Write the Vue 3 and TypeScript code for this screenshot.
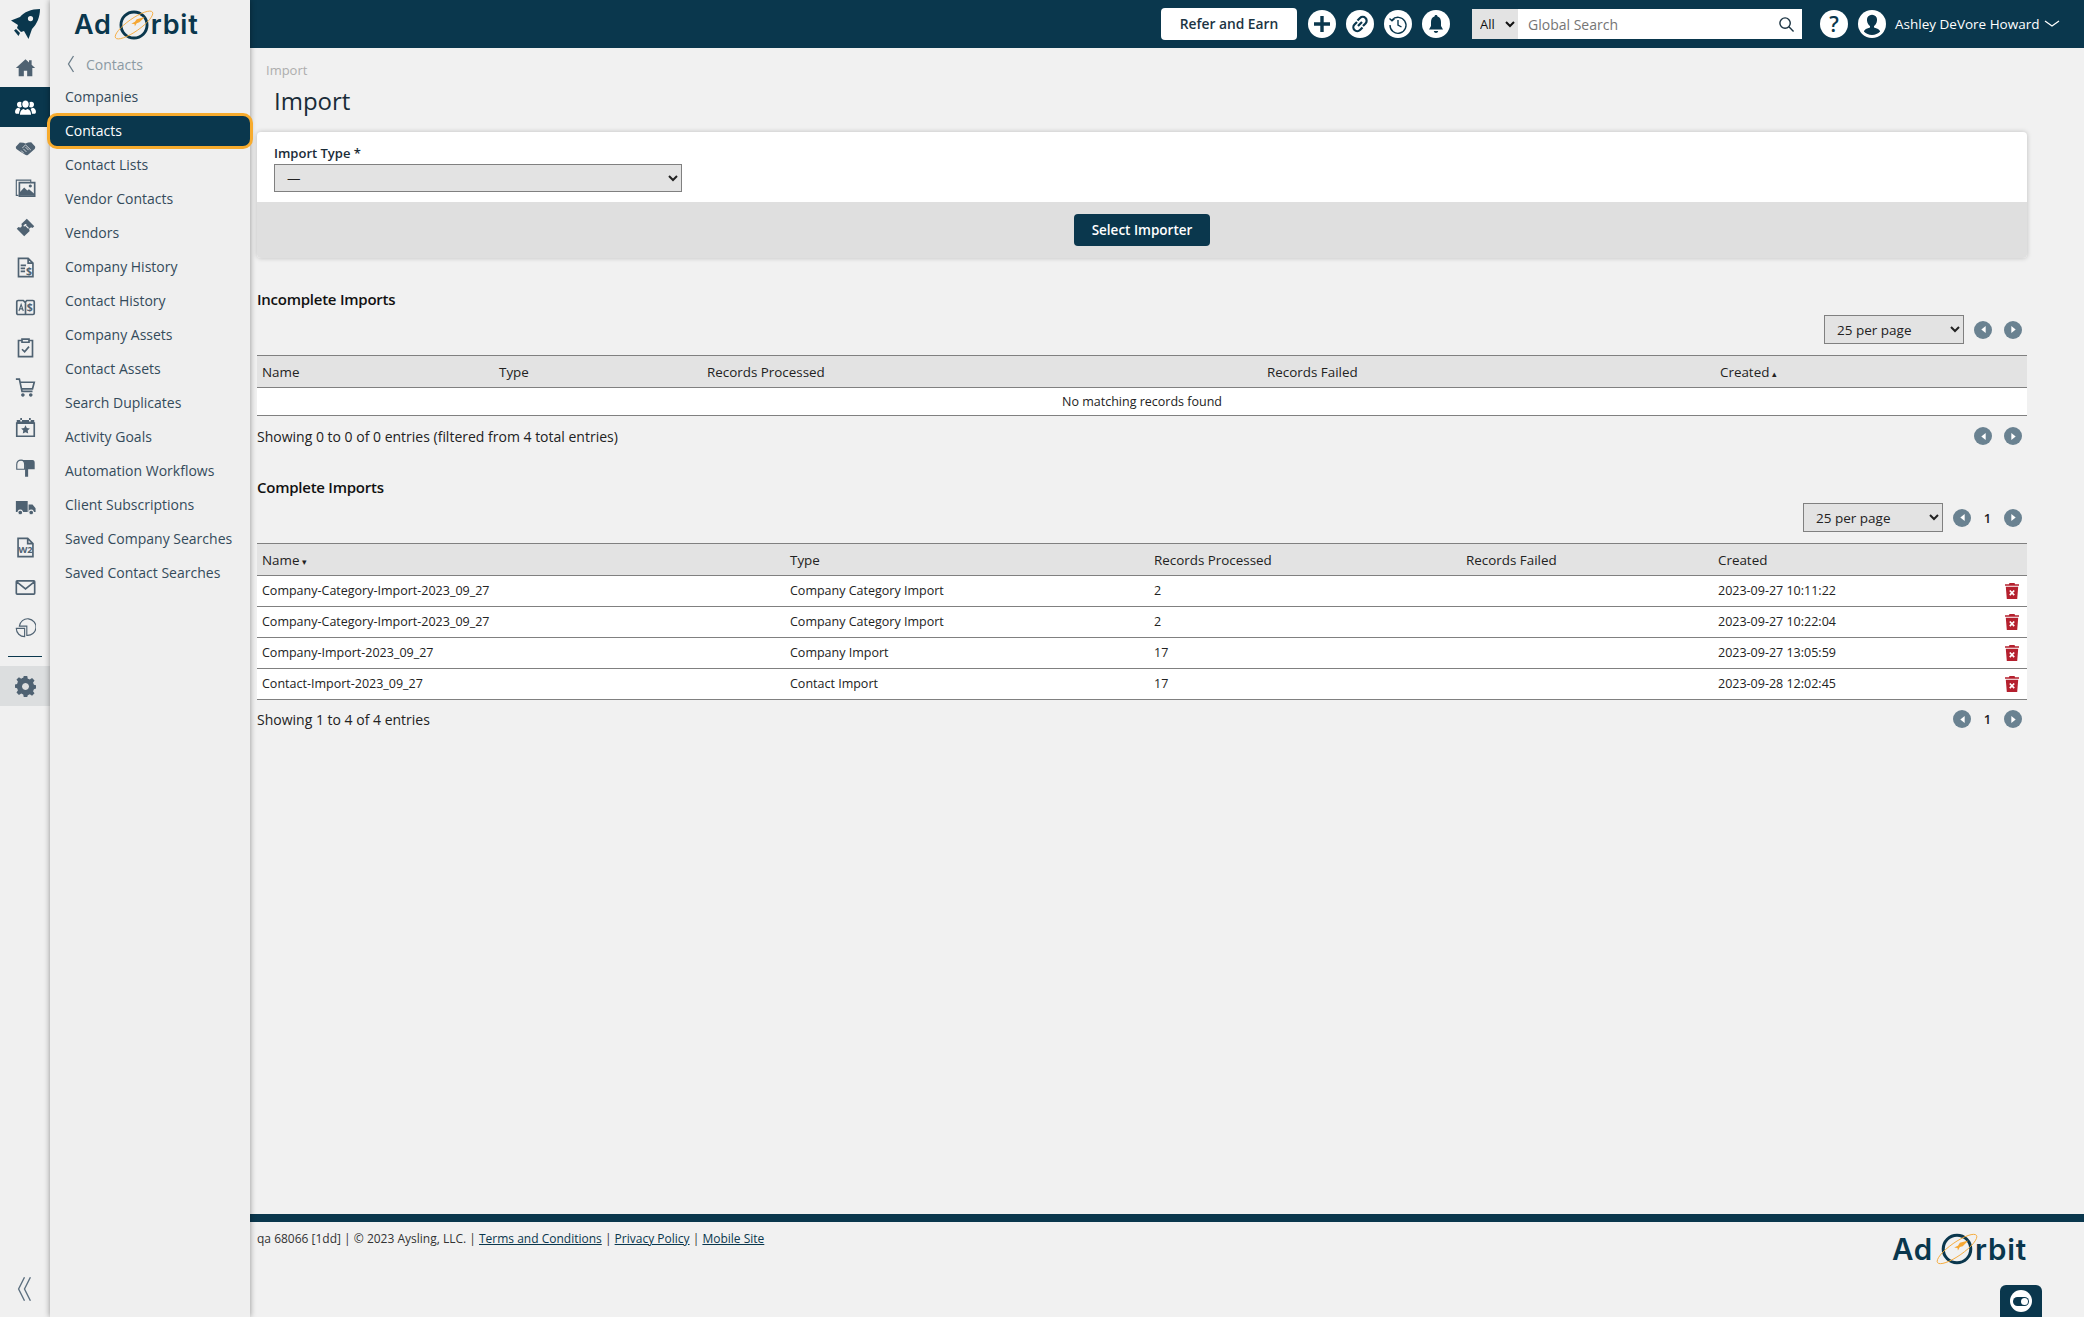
<script setup lang="ts">
type Shape = { d: string; kind?: 'fill' | 'line' | 'thin' | 'cut' | 'halo' };
interface RailIcon { id: string; shapes: Shape[]; label?: string }

const railIcons: RailIcon[] = [
  { id: 'home', shapes: [{ d: 'M12 2.500 1 12.600h3.200V22h5.900v-6.200h3.800V22h5.900v-9.400H23l-4-3.700V3.600h-3v2.600z' }] },
  { id: 'people', shapes: [
    { d: 'M5.500 5.500a3.200 3.200 0 1 1 0 6.400 3.200 3.200 0 0 1 0-6.400zM18.500 5.500a3.200 3.200 0 1 1 0 6.400 3.200 3.200 0 0 1 0-6.400z' },
    { d: 'M0 17.500c0-3 1.500-5 3.500-5.300l2 1 2 3V19H1zM24 17.500c0-3-1.500-5-3.500-5.300l-2 1-2 3V19H23z' },
    { d: 'M12 3.500a4.300 4.300 0 0 1 4.300 4.700c-.1 2.300-1.900 4.600-4.300 4.600s-4.200-2.300-4.300-4.600A4.300 4.300 0 0 1 12 3.500zM5 21c0-4.300 1.800-7.500 4.500-8l2.500 1.300 2.500-1.300c2.700.5 4.500 3.700 4.500 8z', kind: 'halo' },
  ] },
  { id: 'handshake', shapes: [
    { d: 'M1 11 5.500 6.200l4 .3 2.500 1 3-1.300 3.500-.2 4.500 4.800c.4 1.600-.4 3-1.500 3.800l-6.500 5.600c-1 .8-2.300.8-3.300.2l-6-3.700L2 14c-.8-.8-1.100-2-1-3z' },
    { d: 'M8.500 12.500 12 9l6 5.800M7 15.500l3 3M9.500 13.500l3.500 3.500M12 11.500l3.500 3.500', kind: 'cut' },
  ] },
  { id: 'images', shapes: [
    { d: 'M4 21H1.500V3.500H18V6', kind: 'thin' },
    { d: 'M5 6.500h17.500V22H5z', kind: 'line' },
    { d: 'M5.500 21.500v-4l5-5.500 3.500 3.500 2-1.500 6 5v2.500z' },
    { d: 'M17.500 8.500a1.800 1.800 0 1 0 .01 0z' },
  ] },
  { id: 'ticket', shapes: [{ d: 'M13.500 2 22 10.500l-2 2c-1-.8-2.400-.7-3.200.2s-.8 2.200 0 3.200l-6.300 6.100L2 13.500l2-2c1 .8 2.300.7 3.200-.2.800-.9.800-2.300 0-3.200zM11.500 8l-2 2 1 1 1-1 3.500 3.500 1-1-3.500-3.500 1-1z' }] },
  { id: 'invoice', shapes: [{ d: 'M4 1.500h11l5.500 5.500v15.500H4zM15 1.500V7h5.500M6.500 9.500h6M6.500 13h5M6.500 16.500h5', kind: 'line' }], label: '$' },
  { id: 'ad', shapes: [{ d: 'M2 5.500c0-.8.700-1.500 1.500-1.500h6l2 2 2-2h7c.8 0 1.500.7 1.500 1.500v13c0 .8-.7 1.500-1.500 1.500h-17C2.700 20 2 19.300 2 18.500zM12 6v14', kind: 'line' }, { d: 'M4.500 16 7 8.500 9.500 16M5.300 13.500h3.400', kind: 'thin' }], label: '$' },
  { id: 'clip', shapes: [{ d: 'M8 4H4v18.500h16V4h-4M8 2.500h8V6H8zM8 14l3 3 5-6', kind: 'line' }] },
  { id: 'cart', shapes: [
    { d: 'M1 2.500h4l3 14h12M6 6h16l-2 7.500H7.500', kind: 'line' },
    { d: 'M9 18.500a2 2 0 1 0 .01 0zM18 18.500a2 2 0 1 0 .01 0z' },
  ] },
  { id: 'cal', shapes: [
    { d: 'M2 7h20v15H2z', kind: 'line' },
    { d: 'M2 3.500h20V8H2zM6 1h2v4H6zM16 1h2v4h-2z' },
    { d: 'm12 9.500 1.500 3.100 3.500.5-2.500 2.400.6 3.400-3.100-1.600-3.100 1.600.6-3.400L7 13.100l3.500-.5z' },
  ] },
  { id: 'mailbox', shapes: [
    { d: 'M7 3.500c-3 0-5 2-5 5v5.500h9V8.500c0-3-1.800-5-4-5z', kind: 'thin' },
    { d: 'M7 3.500h13c1.700 0 2.500 1.300 2.500 3V14H11.500V8.500C11.500 6 10 4.300 7 3.500zM11.500 14h3.500v8.500h-3.500z' },
  ] },
  { id: 'truck', shapes: [
    { d: 'M1 4.500h13.500V17H1zM15.500 8.500H20l3.500 4.300V17h-8z' },
    { d: 'M6 15a2.700 2.700 0 1 0 .01 0zM18.500 15a2.700 2.700 0 1 0 .01 0z', kind: 'halo' },
  ] },
  { id: 'w2', shapes: [{ d: 'M3.500 1.500h11l6 6v15h-17zM14.500 1.500v6h6', kind: 'line' }], label: 'W2' },
  { id: 'mail', shapes: [{ d: 'M2.500 4.500h19c.6 0 1 .4 1 1v13c0 .6-.4 1-1 1h-19c-.6 0-1-.4-1-1v-13c0-.6.4-1 1-1zM2 5.500l10 8 10-8', kind: 'line' }] },
  { id: 'pie', shapes: [
    { d: 'M5 10.500a9.500 9.500 0 1 1 8.500 10.500V10.500z', kind: 'thin' },
    { d: 'M1.500 13h9.500v9.500A9.500 9.500 0 0 1 1.500 13z', kind: 'thin' },
  ] },
];

const gear =
  'M10 1h4l.6 3a8 8 0 0 1 2.300 1l2.600-1.700 2.800 2.800L20.600 8.700a8 8 0 0 1 1 2.300l2.400.6v3.800l-2.400.6a8 8 0 0 1-1 2.300l1.700 2.500-2.800 2.800-2.600-1.700a8 8 0 0 1-2.300 1L14 25h-4l-.6-3a8 8 0 0 1-2.300-1l-2.600 1.700-2.800-2.800 1.700-2.500a8 8 0 0 1-1-2.300L0 14.400v-3.800l2.400-.6a8 8 0 0 1 1-2.300L1.700 5.100l2.800-2.800L7.100 4a8 8 0 0 1 2.300-1zM12 9a4 4 0 1 0 .01 0z';

const menu: string[] = [
  'Companies', 'Contacts', 'Contact Lists', 'Vendor Contacts', 'Vendors', 'Company History',
  'Contact History', 'Company Assets', 'Contact Assets', 'Search Duplicates', 'Activity Goals',
  'Automation Workflows', 'Client Subscriptions', 'Saved Company Searches', 'Saved Contact Searches',
];

const completeRows = [
  { name: 'Company-Category-Import-2023_09_27', type: 'Company Category Import', done: '2', created: '2023-09-27 10:11:22' },
  { name: 'Company-Category-Import-2023_09_27', type: 'Company Category Import', done: '2', created: '2023-09-27 10:22:04' },
  { name: 'Company-Import-2023_09_27', type: 'Company Import', done: '17', created: '2023-09-27 13:05:59' },
  { name: 'Contact-Import-2023_09_27', type: 'Contact Import', done: '17', created: '2023-09-28 12:02:45' },
];
</script>

<template>
  <div class="app">
    <nav class="rail">
      <svg class="rocket" viewBox="0 0 32 32" aria-hidden="true">
        <path fill-rule="evenodd" d="M31 1C22 1 15 4 11 9L2 12.500 9 17l-1 3 4 4 3-1 4.500 8L23 21c5-5 8-12 8-20zM21.500 8a2.600 2.600 0 1 1 0 5.200 2.600 2.600 0 0 1 0-5.200z" />
        <path d="M5 22.500 7 21l4 4-1.500 3z" />
      </svg>
      <a
        v-for="icon in railIcons"
        :key="icon.id"
        class="rail-item"
        :class="{ active: icon.id === 'people' }"
      >
        <svg viewBox="0 0 24 24" aria-hidden="true">
          <path v-for="(s, i) in icon.shapes" :key="i" :d="s.d" :class="s.kind ?? 'fill'" />
          <text v-if="icon.label === '$' && icon.id === 'invoice'" x="16" y="20" class="glyph">$</text>
          <text v-if="icon.label === '$' && icon.id === 'ad'" x="17" y="16.500" class="glyph">$</text>
          <text v-if="icon.label === 'W2'" x="12" y="18.500" class="glyph w2">W2</text>
        </svg>
      </a>
      <div class="rail-rule"></div>
      <a class="rail-item settings">
        <svg viewBox="0 0 24 26" aria-hidden="true"><path class="fill" :d="gear" /></svg>
      </a>
      <svg class="collapse" viewBox="0 0 14 24" aria-hidden="true">
        <path d="M7 1 1.500 12 7 23M12.500 1 7 12l5.500 11" />
      </svg>
    </nav>

    <aside class="submenu">
      <div class="logo top-logo">
        <span>Ad</span>
        <svg class="logo-o" viewBox="0 0 40 40" aria-hidden="true">
          <circle cx="20" cy="20" r="14.500" class="o-ring" />
          <ellipse cx="20" cy="20" rx="25" ry="7" transform="rotate(-35 20 20)" class="o-orbit" />
          <path d="m32 11-9 2.500-2 3-4 2 3.500.5.500 2.500 2-3.500 3-1z" class="o-ship" />
        </svg>
        <span>rbit</span>
      </div>
      <div class="back">
        <svg viewBox="0 0 8 18" aria-hidden="true"><path d="M6.500 1 1.500 9l5 8" /></svg>
        <span>Contacts</span>
      </div>
      <ul class="menu">
        <li v-for="m in menu" :key="m" :class="{ current: m === 'Contacts' }">{{ m }}</li>
      </ul>
    </aside>

    <div class="page">
      <header class="topbar">
        <button class="refer">Refer and Earn</button>
        <div class="circles">
          <span class="circle"><svg viewBox="0 0 24 24"><path d="M12 4v16M4 12h16" class="c-plus" /></svg></span>
          <span class="circle"><svg viewBox="0 0 24 24"><path d="M10 14l4-4M9.500 8.500l2.500-2.500a3.500 3.500 0 0 1 5.500 5.500l-2.500 2.500M14.500 15.500 12 18a3.500 3.500 0 0 1-5.500-5.500L9 10" class="c-line" /></svg></span>
          <span class="circle"><svg viewBox="0 0 24 24"><path d="M6 8a8 8 0 1 1-2 5M3.500 6.500 6 8.800l2.500-2M12 8v5l3.500 2" class="c-thin" /></svg></span>
          <span class="circle"><svg viewBox="0 0 24 24"><path d="M12 3c-1 0-1.500.6-1.500 1.500C8 5.300 7 7.500 7 10v4l-2 3.500h14L17 14v-4c0-2.500-1-4.700-3.500-5.500C13.500 3.600 13 3 12 3zM9.800 19h4.400c-.2 1.300-1.100 2-2.200 2s-2-.7-2.200-2z" class="c-fill" /></svg></span>
        </div>
        <div class="search">
          <select class="scope"><option>All</option></select>
          <input class="query" placeholder="Global Search" />
          <svg class="lens" viewBox="0 0 18 18"><circle cx="7.500" cy="7.500" r="5.500" /><path d="m11.500 11.500 5 5" /></svg>
        </div>
        <span class="circle help">?</span>
        <span class="circle user"><svg viewBox="0 0 24 24"><path d="M12 4a4.300 4.300 0 0 1 4.300 4.700c-.1 2.300-1.400 4.300-2.600 5v1.300c2.500.8 5 1.700 5.300 3.500a9.800 9.800 0 0 1-14 0c.3-1.800 2.800-2.700 5.300-3.500v-1.300c-1.200-.7-2.500-2.700-2.600-5A4.300 4.300 0 0 1 12 4z" class="c-fill" /></svg></span>
        <span class="username">Ashley DeVore Howard</span>
        <svg class="user-chev" viewBox="0 0 16 8"><path d="m1 1 7 5 7-5" /></svg>
      </header>

      <main class="content">
        <div class="crumb">Import</div>
        <h1>Import</h1>

        <section class="card">
          <div class="card-body">
            <label class="field-label">Import Type *</label>
            <select class="native type-select"><option>—</option></select>
          </div>
          <div class="card-foot"><button class="primary">Select Importer</button></div>
        </section>

        <h2 class="first">Incomplete Imports</h2>
        <div class="toolbar">
          <select class="native per-page"><option>25 per page</option></select>
          <div class="pager">
            <button class="nav"><svg viewBox="0 0 8 10"><path d="M6.500 1v8L1.500 5z" /></svg></button>
            <button class="nav"><svg viewBox="0 0 8 10"><path d="M1.500 1v8l5-4z" /></svg></button>
          </div>
        </div>
        <table class="grid incomplete">
          <colgroup><col class="a" /><col class="b" /><col class="c" /><col class="d" /><col /></colgroup>
          <thead>
            <tr>
              <th>Name</th><th>Type</th><th>Records Processed</th><th>Records Failed</th>
              <th>Created <span class="sort">▴</span></th>
            </tr>
          </thead>
          <tbody>
            <tr><td colspan="5" class="empty">No matching records found</td></tr>
          </tbody>
        </table>
        <div class="tfoot">
          <span>Showing 0 to 0 of 0 entries (filtered from 4 total entries)</span>
          <div class="pager">
            <button class="nav"><svg viewBox="0 0 8 10"><path d="M6.500 1v8L1.500 5z" /></svg></button>
            <button class="nav"><svg viewBox="0 0 8 10"><path d="M1.500 1v8l5-4z" /></svg></button>
          </div>
        </div>

        <h2 class="second">Complete Imports</h2>
        <div class="toolbar">
          <select class="native per-page"><option>25 per page</option></select>
          <div class="pager">
            <button class="nav"><svg viewBox="0 0 8 10"><path d="M6.500 1v8L1.500 5z" /></svg></button>
            <span class="page-no">1</span>
            <button class="nav"><svg viewBox="0 0 8 10"><path d="M1.500 1v8l5-4z" /></svg></button>
          </div>
        </div>
        <table class="grid complete">
          <colgroup><col class="a" /><col class="b" /><col class="c" /><col class="d" /><col class="e" /><col /></colgroup>
          <thead>
            <tr>
              <th>Name <span class="sort">▾</span></th><th>Type</th><th>Records Processed</th><th>Records Failed</th><th>Created</th><th></th>
            </tr>
          </thead>
          <tbody>
            <tr v-for="(r, i) in completeRows" :key="i">
              <td>{{ r.name }}</td>
              <td>{{ r.type }}</td>
              <td>{{ r.done }}</td>
              <td></td>
              <td>{{ r.created }}</td>
              <td class="act">
                <svg class="trash" viewBox="0 0 14 16" aria-hidden="true">
                  <path class="t-red" d="M4.500 0h5l.6 1.300H14v1.500H0V1.300h3.900zM.8 3.700h12.400L12.200 16H1.800z" />
                  <path class="t-x" d="m4.800 7.500 4.400 4.600M9.200 7.500l-4.400 4.600" />
                </svg>
              </td>
            </tr>
          </tbody>
        </table>
        <div class="tfoot tight">
          <span>Showing 1 to 4 of 4 entries</span>
          <div class="pager">
            <button class="nav"><svg viewBox="0 0 8 10"><path d="M6.500 1v8L1.500 5z" /></svg></button>
            <span class="page-no">1</span>
            <button class="nav"><svg viewBox="0 0 8 10"><path d="M1.500 1v8l5-4z" /></svg></button>
          </div>
        </div>
      </main>

      <footer class="footer">
        <div class="foot-text">
          qa 68066 [1dd] | © 2023 Aysling, LLC. |
          <a>Terms and Conditions</a> | <a>Privacy Policy</a> | <a>Mobile Site</a>
        </div>
        <div class="logo foot-logo">
          <span>Ad</span>
          <svg class="logo-o" viewBox="0 0 40 40" aria-hidden="true">
            <circle cx="20" cy="20" r="14.500" class="o-ring" />
            <ellipse cx="20" cy="20" rx="25" ry="7" transform="rotate(-35 20 20)" class="o-orbit" />
            <path d="m32 11-9 2.500-2 3-4 2 3.500.5.500 2.500 2-3.500 3-1z" class="o-ship" />
          </svg>
          <span>rbit</span>
        </div>
        <button class="toggle">
          <span class="toggle-disc"><span class="toggle-pill"></span></span>
        </button>
      </footer>
    </div>
  </div>
</template>

<style>
html, body { margin: 0; padding: 0; background: #f1f1f1; }
</style>

<style scoped>
* { box-sizing: border-box; }
.app {
  display: flex;
  height: 100vh;
  min-height: 1317px;
  font-family: "Open Sans", "Noto Sans", sans-serif;
  color: #1a1a1a;
  background: #f1f1f1;
  overflow: hidden;
}

/* rail */
.rail {
  width: 50px;
  flex: none;
  display: flex;
  flex-direction: column;
  align-items: stretch;
  background: #f0f0f0;
  position: relative;
  z-index: 2;
}
.rocket { width: 32px; height: 32px; margin: 8px 0 7px 9px; fill: #0a374d; flex: none; }
.rail-item {
  height: 40px;
  flex: none;
  display: flex;
  align-items: center;
  justify-content: center;
}
.rail-item svg { width: 21px; height: 21px; }
.fill { fill: #4f6272; stroke: none; fill-rule: evenodd; }
.line { fill: none; stroke: #4f6272; stroke-width: 1.900; }
.thin { fill: none; stroke: #4f6272; stroke-width: 1.300; }
.cut { fill: none; stroke: #f0f0f0; stroke-width: 0.900; }
.halo { fill: #4f6272; stroke: #f0f0f0; stroke-width: 1.200; }
.glyph { font: 700 12px "Open Sans", sans-serif; fill: #4f6272; text-anchor: middle; }
.w2 { font-size: 10.500px; }
.active { background: #0a374d; }
.active .fill { fill: #fff; }
.active .halo { fill: #fff; stroke: #0a374d; }
.rail-rule { height: 1px; background: #0a374d; margin: 9px 8px 9px; flex: none; }
.settings { background: #dcdedf; }
.settings svg { width: 21px; height: 23px; }
.collapse {
  width: 15px;
  height: 26px;
  margin: auto 0 15px 17px;
  fill: none;
  stroke: #5d7080;
  stroke-width: 1.300;
  flex: none;
}

/* submenu */
.submenu {
  width: 200px;
  flex: none;
  background: #efefef;
  box-shadow: 0 0 6px rgba(0, 0, 0, 0.4);
  position: relative;
  z-index: 3;
}
.logo {
  display: flex;
  align-items: center;
  font-family: Inter, "Open Sans", sans-serif;
  font-weight: 600;
  color: #0a374d;
  letter-spacing: 0.800px;
}
.top-logo { font-size: 27px; height: 38px; margin: 6px 0 0 24px; line-height: 38px; }
.logo-o { width: 36px; height: 36px; margin: 0 -1px 0 4px; overflow: visible; flex: none; }
.o-ring { fill: none; stroke: #0a374d; stroke-width: 3.200; }
.o-orbit { fill: none; stroke: #f5a733; stroke-width: 0.900; }
.o-ship { fill: #f5a733; }
.back {
  display: flex;
  align-items: center;
  height: 20px;
  margin-top: 10px;
  padding-left: 17px;
  font-size: 14px;
  color: #8b9aa3;
}
.back svg { width: 8px; height: 18px; margin-right: 11px; fill: none; stroke: #6c7e8a; stroke-width: 1.300; }
.menu { list-style: none; margin: 6px 0 0; padding: 0; }
.menu li {
  height: 34px;
  line-height: 34px;
  padding-left: 15px;
  font-size: 14px;
  color: #344b5b;
  white-space: nowrap;
}
.menu li.current {
  height: 36px;
  line-height: 30px;
  margin: -1px -3px -1px -3px;
  padding-left: 15px;
  color: #fff;
  background: #0a374d;
  border: 3px solid #f7ab2d;
  border-radius: 10px;
  position: relative;
}

/* page */
.page { flex: 1; min-width: 0; display: flex; flex-direction: column; }
.topbar {
  height: 48px;
  flex: none;
  background: #0a374d;
  display: flex;
  align-items: center;
  padding-left: 911px;
  color: #fff;
}
.refer {
  width: 136px;
  height: 32px;
  border: 0;
  border-radius: 4px;
  background: #fff;
  color: #1c3443;
  font: 600 13.800px "Open Sans", sans-serif;
  padding: 0 0 1px;
}
.circles { display: flex; gap: 10px; margin-left: 11px; }
.circle {
  width: 28px;
  height: 28px;
  border-radius: 50%;
  background: #fff;
  display: flex;
  align-items: center;
  justify-content: center;
  flex: none;
}
.circle svg { width: 24px; height: 24px; }
.c-plus { fill: none; stroke: #0a374d; stroke-width: 3.400; }
.c-line { fill: none; stroke: #0a374d; stroke-width: 2.200; }
.c-thin { fill: none; stroke: #0a374d; stroke-width: 1.400; }
.c-fill { fill: #0a374d; }
.search {
  width: 330px;
  height: 30px;
  margin-left: 22px;
  display: flex;
  align-items: center;
  background: #fff;
  position: relative;
  flex: none;
}
.scope {
  width: 46px;
  height: 30px;
  border: 0;
  background: #e3e3e3;
  font: 400 13px "Open Sans", sans-serif;
  color: #111;
  padding-left: 4px;
}
.query {
  flex: 1;
  min-width: 0;
  border: 0;
  outline: 0;
  height: 30px;
  padding: 0 30px 0 10px;
  font: 400 14px "Open Sans", sans-serif;
  background: transparent;
}
.query::placeholder { color: #757575; opacity: 1; }
.lens { position: absolute; right: 7px; top: 7px; width: 17px; height: 17px; fill: none; stroke: #1c3443; stroke-width: 1.500; }
.help {
  margin-left: 18px;
  color: #0a374d;
  font: 600 21px "Open Sans", sans-serif;
}
.user { margin-left: 10px; overflow: hidden; }
.user svg { width: 28px; height: 28px; }
.username { margin-left: 9px; font-size: 13.500px; white-space: nowrap; }
.user-chev { width: 16px; height: 8px; margin-left: 5px; fill: none; stroke: #fff; stroke-width: 1.300; flex: none; }

/* content */
.content { flex: 1; padding: 0 57px 0 7px; }
.crumb { margin-top: 12px; height: 20px; padding-left: 9px; line-height: 20px; font-size: 13px; color: #adadad; }
h1 {
  margin: 5px 0 0;
  height: 32px;
  line-height: 32px;
  padding-left: 17px;
  font-size: 24px;
  font-weight: 400;
  color: #1a2c38;
}
.card {
  margin-top: 15px;
  height: 126px;
  border-radius: 4px;
  overflow: hidden;
  box-shadow: 0 0 5px rgba(0, 0, 0, 0.22);
  background: #fff;
}
.card-body { height: 70px; padding: 12px 0 0 17px; }
.field-label { display: block; height: 20px; line-height: 18px; font-size: 13px; font-weight: 600; color: #1a2c38; }
.native {
  height: 29px;
  background-color: #e3e3e3;
  border: 1px solid #808080;
  border-radius: 0;
  font: 400 13.500px "Open Sans", sans-serif;
  color: #222;
  padding-left: 8px;
  display: block;
}
.type-select { width: 408px; height: 28px; }
.card-foot {
  height: 56px;
  background: #dfdfdf;
  display: flex;
  align-items: center;
  justify-content: center;
}
.primary {
  width: 136px;
  height: 32px;
  border: 0;
  border-radius: 4px;
  background: #0a374d;
  color: #fff;
  font: 600 13.500px "Open Sans", sans-serif;
  padding: 0;
}
h2 {
  height: 20px;
  line-height: 20px;
  font-size: 15px;
  font-weight: 600;
  color: #111;
  letter-spacing: -0.250px;
}
h2.first { margin: 31px 0 0; }
h2.second { margin: 28px 0 0; }
.toolbar {
  height: 29px;
  margin-top: 6px;
  display: flex;
  justify-content: flex-end;
  align-items: center;
  gap: 10px;
}
.per-page { width: 140px; }
.pager { display: flex; align-items: center; padding-right: 5px; }
.nav {
  width: 18px;
  height: 18px;
  border: 0;
  padding: 0;
  border-radius: 50%;
  background: #6a8291;
  display: flex;
  align-items: center;
  justify-content: center;
}
.nav svg { width: 7px; height: 9px; fill: #fff; }
.nav + .nav { margin-left: 12px; }
.page-no { width: 33px; text-align: center; font-size: 13px; font-weight: 600; color: #222; }
.grid {
  width: 100%;
  margin-top: 11px;
  border-collapse: collapse;
  table-layout: fixed;
  font-size: 12.500px;
}
.grid th {
  height: 32px;
  padding: 0 0 0 5px;
  background: #e3e3e3;
  border-top: 1px solid #808080;
  border-bottom: 1px solid #808080;
  text-align: left;
  font-size: 13.400px;
  font-weight: 400;
  color: #222;
  white-space: nowrap;
}
.grid td {
  height: 31px;
  padding: 0 0 1px 5px;
  background: #fff;
  border-bottom: 1px solid #808080;
  color: #222;
  white-space: nowrap;
}
.grid td.empty { height: 28px; padding: 0; text-align: center; }
.incomplete .a { width: 237px; }
.incomplete .b { width: 208px; }
.incomplete .c { width: 560px; }
.incomplete .d { width: 453px; }
.complete .a { width: 528px; }
.complete .b { width: 364px; }
.complete .c { width: 312px; }
.complete .d { width: 252px; }
.complete .e { width: 276px; }
.sort { font-size: 9px; line-height: 1; margin-left: -1px; }
.act { text-align: right; padding-right: 8px !important; }
.trash { width: 14px; height: 16px; display: inline-block; vertical-align: middle; }
.t-red { fill: #b5202e; }
.t-x { fill: none; stroke: #fff; stroke-width: 1.700; }
.tfoot {
  height: 26px;
  margin-top: 7px;
  display: flex;
  align-items: center;
  justify-content: space-between;
  font-size: 14px;
  color: #222;
}
.tfoot.tight { margin-top: 6px; }

/* footer */
.footer {
  height: 103px;
  flex: none;
  border-top: 8px solid #0a374d;
  padding: 8px 57px 0 7px;
  display: flex;
  justify-content: space-between;
  align-items: flex-start;
  position: relative;
}
.foot-text { font-size: 12px; line-height: 18px; color: #333; white-space: nowrap; }
.foot-text a { color: #0a374d; text-decoration: underline; }
.foot-logo { font-size: 29.500px; height: 38px; line-height: 38px; margin-top: 0; }
.foot-logo .logo-o { width: 38px; height: 38px; margin-left: 5px; }
.toggle {
  position: absolute;
  right: 42px;
  bottom: 0;
  width: 42px;
  height: 32px;
  border: 0;
  padding: 0;
  border-radius: 6px 6px 0 0;
  background: #0a374d;
  display: flex;
  align-items: center;
  justify-content: center;
}
.toggle-disc {
  width: 22px;
  height: 22px;
  border-radius: 50%;
  background: #fff;
  display: flex;
  align-items: center;
  justify-content: center;
}
.toggle-pill {
  width: 16px;
  height: 9px;
  border-radius: 5px;
  background: #0a374d;
  position: relative;
}
.toggle-pill::after {
  content: "";
  position: absolute;
  right: 1px;
  top: 1px;
  width: 7px;
  height: 7px;
  border-radius: 50%;
  background: #fff;
}
</style>
